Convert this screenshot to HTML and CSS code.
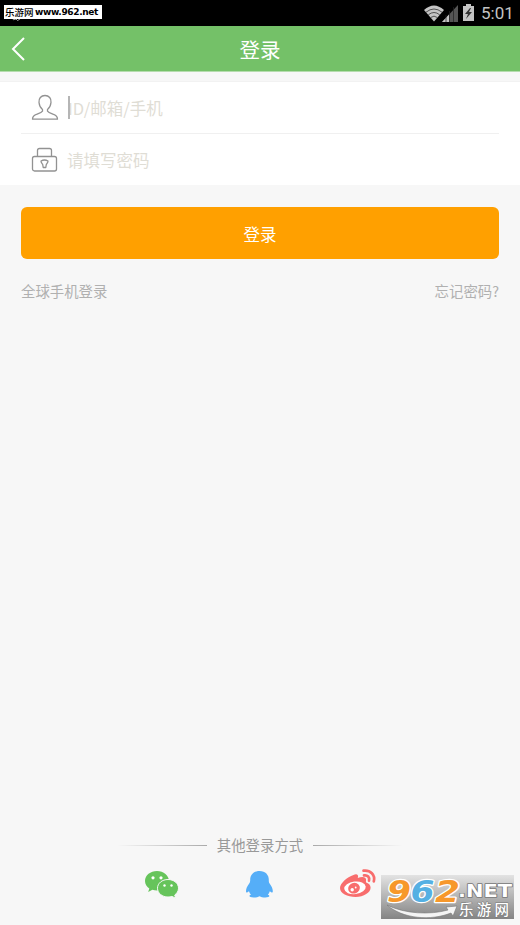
FILE: index.html
```html
<!DOCTYPE html>
<html lang="zh-CN">
<head>
  <meta charset="UTF-8" />
  <meta name="viewport" content="width=device-width, initial-scale=1" />
  <title>登录</title>
  <link rel="stylesheet" href="styles.css">
</head>
<body>
  <!-- Status bar -->
  <div class="status-bar">
    <svg class="notice" width="14" height="6" viewBox="0 0 14 6" fill="none" stroke="#aaa">
      <path d="M1 1q1 3 4 1q1 3 4 0M10 1h3" />
    </svg>
    <span class="site-tag">乐游网 <b>www.962.net</b></span>
    <svg class="wifi" width="22" height="17" viewBox="0 0 22 17">
      <path fill="#c4c4c4" d="M1 5Q11-4 21 5L11 16.500Z" />
      <path fill="none" stroke="#333" stroke-width=".8" d="M3 7.200Q11 .8 19 7.200M5.300 9.800Q11 5.200 16.700 9.800M7.700 12.500Q11 9.800 14.300 12.500" />
    </svg>
    <svg class="signal" width="16" height="17" viewBox="0 0 16 17">
      <path fill="#555" d="M0 17L16 0V17Z" />
      <path fill="#c4c4c4" d="M0 17L7 9.500V17Z" />
      <path stroke="#222" stroke-width=".7" d="M4 10v7M7.500 6v11M11.500 2v15" />
    </svg>
    <svg class="battery" width="11" height="17" viewBox="0 0 11 17">
      <path fill="#c4c4c4" d="M3 0h5v2h3v15H0V2h3z" />
      <path fill="#333" d="M7 4L2 10h3l-2 5 6-7H6l2-4z" />
    </svg>
    <span class="clock">5:01</span>
  </div>

  <header class="header">
    <svg class="back" width="14" height="24" viewBox="0 0 14 24" fill="none" stroke="#fff" stroke-width="2">
      <path d="M13 1L2 12l11 11" />
    </svg>
    <h1>登录</h1>
  </header>

  <main class="content">
    <form class="login">
      <div class="fields">
        <label class="field">
          <svg width="28" height="28" viewBox="0 0 28 28" fill="none" stroke="#929292" stroke-width="1.300" stroke-linejoin="round">
            <path d="M14 1.500c-4 0-6.500 3-6 7 .3 3 1.500 5.500 3.500 7v1.700c-1 1.300-3 2-5.500 3-3 1.100-4.500 2.600-4.500 5h25c0-2.400-1.500-3.900-4.500-5-2.500-1-4.500-1.700-5.500-3v-1.700c2-1.500 3.200-4 3.500-7 .5-4-2-7-6-7z" />
          </svg>
          <span class="cursor"></span>
          <span class="hint">ID/邮箱/手机</span>
        </label>
        <label class="field">
          <svg width="28" height="28" viewBox="0 0 28 28" fill="none" stroke="#929292" stroke-width="1.300" stroke-linejoin="round">
            <rect x="1.500" y="10.500" width="24" height="14.500" rx="2" />
            <path d="M6.500 10.500v-6q0-2 2-2h10q2 0 2 2v6M10 15q3.500-2 7 0c0 2-1.200 2.500-1.700 3.500l-.5 3h-2.600l-.5-3c-.5-1-1.700-1.500-1.700-3.500z" />
          </svg>
          <span class="hint">请填写密码</span>
        </label>
      </div>
      <button class="submit" type="button">登录</button>
      <div class="links">
        <a>全球手机登录</a>
        <a>忘记密码?</a>
      </div>
    </form>

    <!-- Third party login -->
    <section class="others">
      <div class="others-title"><i></i><span>其他登录方式</span><i class="right"></i></div>
      <div class="social">
        <svg width="36" height="30" viewBox="0 0 36 30">
          <path fill="#66c45b" d="M14 2C7.500 2 2 6.300 2 12c0 3.200 1.700 5.800 4.300 7.600L5.200 23l4.200-2.200c1.400.4 3 .6 4.600.6 6.600 0 12-4.100 12-9.400S20.600 2 14 2z" />
          <path fill="#66c45b" stroke="#f7f7f7" stroke-width="1" d="M25 10.500c-5.800 0-10.500 3.700-10.500 8.700S19.200 28 25 28c1.400 0 2.700-.2 3.900-.6l3.800 1.800-1-3.200c2.300-1.600 3.800-4 3.800-6.800 0-5-4.700-8.700-10.500-8.700z" />
          <g fill="#fff"><circle cx="10" cy="8.800" r="1.600" /><circle cx="18" cy="8.800" r="1.600" /><circle cx="21.500" cy="16.500" r="1.200" /><circle cx="28.500" cy="16.500" r="1.200" /></g>
        </svg>
        <svg width="30" height="30" viewBox="0 0 30 30">
          <path fill="#55aef8" d="M15.500 2c-6 0-9.300 4-9.300 8.700 0 1.600-.2 2.500-1 3.900C3.300 17.200 2 19.700 2 22c0 2 .8 1.900 3 .2.500 1.500 1.100 2.500 2 3.300-3 1.400-1.500 3 2.500 3 2.600 0 4.500-.5 6-1.300 1.500.8 3.200 1.300 5.800 1.300 4 0 5.500-1.600 2.500-3 .9-.8 1.500-1.800 2-3.300 2.200 1.700 3 1.800 3-.2 0-2.300-1.300-4.800-3.200-7.400-.8-1.400-.8-2.300-.8-3.900C24.800 6 21.500 2 15.500 2z" />
        </svg>
        <svg width="38" height="32" viewBox="0 0 38 32">
          <path fill="#f86d6d" d="M14.500 7c3-1.600 5.500-.4 4.300 3 3.700-1.500 8.600-1.700 8.300 2.300-.1 1.200-.5 2 .5 2.500 2.300.9 4 2.400 4 5 0 4.700-6.800 9.200-15 9.200S1 25.500 1 20c0-4.800 7-10.700 13.500-13z" />
          <ellipse cx="16" cy="19.800" rx="10.800" ry="6.300" fill="#fff" transform="rotate(-7 16 19.800)" />
          <ellipse cx="15" cy="20.200" rx="6" ry="5.300" fill="#f86d6d" transform="rotate(-20 15 20.200)" />
          <circle cx="13.200" cy="21.800" r="1.700" fill="#fff" /><circle cx="16.700" cy="19.500" r=".9" fill="#fff" />
          <path fill="none" stroke="#f86d6d" stroke-width="2.700" stroke-linecap="round" d="M24.500 2.700c6.800-1 12 4.300 10.300 10.700M25 7.400c3.500-.6 6 1.900 5 5.200" />
        </svg>
      </div>
    </section>
  </main>

  <!-- Site logo in the corner -->
  <div class="watermark">
    <svg width="133" height="44" viewBox="0 0 133 44">
      <path fill="#f4f4f4" stroke="#777" stroke-width=".6" d="M6 30C24 39 49 40 67 35l-2-3 11-1-4 10-2-3C50 46 22 44 6 30z" />
      <g class="logo-num">
        <text x="6" y="26.500" textLength="24" lengthAdjust="spacingAndGlyphs" fill="#f7982b">9</text>
        <text x="29.500" y="26.500" textLength="24" lengthAdjust="spacingAndGlyphs" fill="#55b0e3">6</text>
        <text x="54" y="26.500" textLength="25" lengthAdjust="spacingAndGlyphs" fill="#f7982b">2</text>
      </g>
      <text class="logo-net" x="77" y="21.500" textLength="54" lengthAdjust="spacingAndGlyphs">.NET</text>
      <text class="logo-cn" x="78" y="39.500" textLength="50">乐游网</text>
    </svg>
  </div>
</body>
</html>
```
FILE: styles.css
```css
* {
  box-sizing: border-box;
}
body {
  margin: 0;
  height: 925px;
  display: flex;
  flex-direction: column;
  background: #f7f7f7;
  font-family: "Noto Sans CJK SC", sans-serif;
  overflow: hidden;
  position: relative;
}
/* Status bar */
.status-bar {
  position: relative;
  height: 26px;
  flex: none;
  display: flex;
  align-items: center;
  background: #000;
  padding: 0 8px 0 4px;
}
.notice {
  position: absolute;
  left: 11px;
  top: 17px;
}
.site-tag {
  position: relative;
  width: 98px;
  height: 14px;
  margin: 0 auto 2px 0;
  background: #fff;
  color: #000;
  font-size: 9.500px;
  line-height: 14px;
  font-weight: 500;
  white-space: nowrap;
  display: flex;
  justify-content: space-between;
  padding: 0 4px 0 1px;
}
.site-tag b {
  font-family: "DejaVu Sans", sans-serif;
  font-size: 9px;
  letter-spacing: -0.35px;
}
.wifi {
  margin-right: -3px;
}
.signal {
  margin-right: 5px;
}
.battery {
  margin: 0 7px 2px 0;
}
.clock {
  width: 31px;
  color: #c4c4c4;
  font: 17px/28px Roboto, sans-serif;
  white-space: nowrap;
}
/* Title bar */
.header {
  height: 45px;
  flex: none;
  display: grid;
  grid-template-columns: 40px 1fr 40px;
  align-items: center;
  background: #74c168;
  box-shadow: 0 1px 0 #b5dcae;
}
.back {
  margin-left: 11px;
}
.header h1 {
  margin: 0;
  color: #fff;
  font-size: 20.500px;
  line-height: 46px;
  font-weight: 400;
  text-align: center;
}
.content {
  flex: 1;
  display: flex;
  flex-direction: column;
  justify-content: space-between;
  padding-top: 11px;
}
/* Login form */
.fields {
  background: #fff;
  padding: 0 21px;
  box-shadow: 0 -1px 0 #f2f2f2;
}
.field {
  position: relative;
  height: 51px;
  display: flex;
  align-items: center;
  padding-left: 10px;
}
.field:first-child {
  height: 52px;
  border-bottom: 1px solid #f0f0f0;
}
.hint {
  margin-left: 8px;
  color: #dfddd5;
  font-size: 16.500px;
  line-height: 24px;
}
.cursor {
  position: absolute;
  left: 47px;
  top: 14px;
  width: 1.500px;
  height: 23px;
  background: #b5b5b5;
}
.cursor + .hint {
  margin-left: 9px;
}
.submit {
  display: block;
  width: 478px;
  height: 52px;
  margin: 22px 21px 0;
  border: none;
  border-radius: 6px;
  background: #ffa000;
  color: #fff;
  font: 16.500px/52px "Noto Sans CJK SC", sans-serif;
  padding: 1px 0 0;
}
.links {
  display: flex;
  justify-content: space-between;
  padding: 21px 21px 0;
  color: #b0b0b0;
  font-size: 14.400px;
  line-height: 22px;
}
/* Other login ways */
.others {
  padding-bottom: 25px;
}
.others-title {
  display: flex;
  align-items: center;
  justify-content: center;
  gap: 10px;
  color: #999;
  font-size: 14.400px;
  line-height: 22px;
}
.others-title i {
  width: 90px;
  height: 1px;
  background: linear-gradient(to right, transparent, #aaa);
}
.others-title .right {
  background: linear-gradient(to left, transparent, #aaa);
}
.social {
  display: flex;
  justify-content: space-between;
  align-items: center;
  padding: 12px 143px 0;
}
/* Corner logo */
.watermark {
  position: absolute;
  left: 381px;
  top: 875px;
  width: 133px;
  height: 44px;
  background: linear-gradient(#e3e3e3, #848484);
}
.watermark svg {
  display: block;
  overflow: visible;
}
.watermark text {
  paint-order: stroke;
  stroke-linejoin: round;
}
.logo-num {
  font: italic bold 30px "DejaVu Sans", sans-serif;
  stroke: #fff;
  stroke-width: 2.500px;
}
.logo-net {
  font: bold 17px "DejaVu Sans", sans-serif;
  fill: #fff;
  stroke: #777;
  stroke-width: 1.500px;
}
.logo-cn {
  font: 500 14.500px "Noto Sans CJK SC", sans-serif;
  fill: #fff;
  stroke: #777;
  stroke-width: 1px;
}
```
